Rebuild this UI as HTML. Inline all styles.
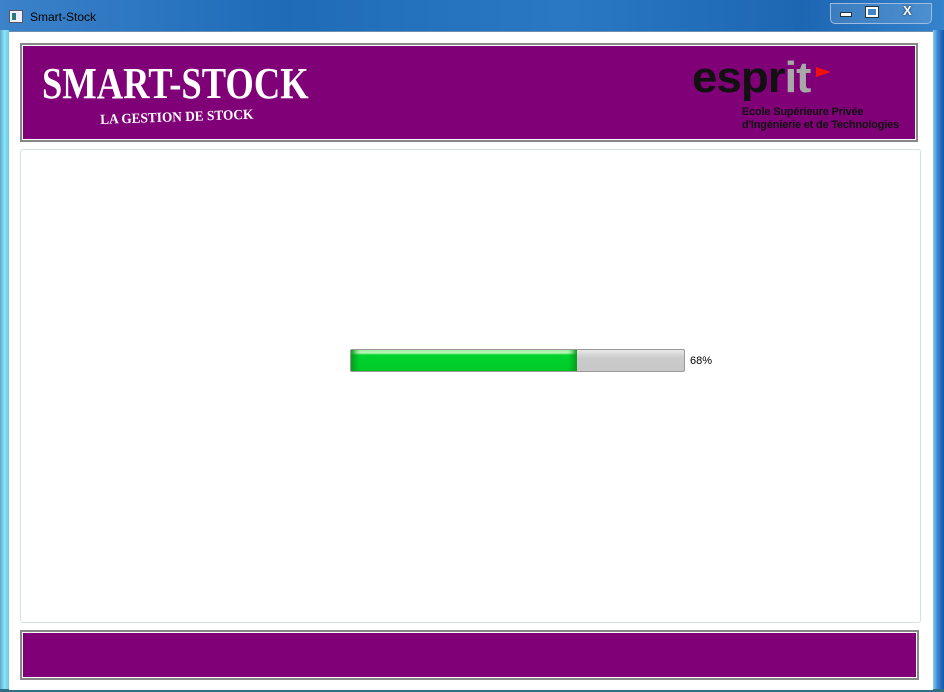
<!DOCTYPE html>
<html><head><meta charset="utf-8"><style>
body{margin:0;width:944px;height:692px;overflow:hidden;position:relative;background:#2f7fc8;font-family:"Liberation Sans",sans-serif}
.abs{position:absolute}
</style></head><body>
<div class="abs" style="left:0;top:0;width:944px;height:32px;background:linear-gradient(90deg,#3b82c9,#1f6bb8 30%,#2a78c4 60%,#1d66b2 85%,#3583cc)"></div>
<div class="abs" style="left:0;top:30px;width:9px;height:662px;background:linear-gradient(90deg,#5aa9d0,#8ee4f7 50%,#6cc8e8)"></div>
<div class="abs" style="left:933px;top:30px;width:11px;height:662px;background:linear-gradient(90deg,#8ec8f0,#3a8ad6 40%,#1357a8)"></div>
<div class="abs" style="left:0;top:689px;width:944px;height:3px;background:#2f6f86"></div>
<div class="abs" style="left:9px;top:10px;width:12px;height:11px;background:#eef;border:1px solid #556"><div style="width:4px;height:7px;background:#2a7a7a;margin:2px"></div></div>
<div class="abs" style="left:30px;top:10px;font-size:12px;color:#000">Smart-Stock</div>
<div class="abs" style="left:830px;top:3px;width:100px;height:19px;border:1px solid #9bbbe0;border-radius:0 0 5px 5px;background:rgba(255,255,255,.12)"></div>
<div class="abs" style="left:840px;top:12px;width:10px;height:3px;background:#fff;border:1px solid #234"></div>
<div class="abs" style="left:866px;top:7px;width:8px;height:6px;border:2px solid #fff;outline:1px solid #234"></div>
<div class="abs" style="left:903px;top:3px;color:#fff;font-weight:bold;font-size:13px;text-shadow:0 0 2px #123">X</div>
<div class="abs" style="left:9px;top:31px;width:924px;height:658px;background:#fff;border-top:1px solid #6a8fb2"></div>
<div class="abs" style="left:20px;top:43px;width:894px;height:95px;border:2px solid #888;background:#800078;box-shadow:inset 0 0 0 1px #fff"></div>
<div class="abs" style="left:42px;top:58px;color:#fff;font-family:'Liberation Serif',serif;font-weight:bold;font-size:44px;transform:scaleX(0.83);transform-origin:0 0;white-space:nowrap">SMART-STOCK</div>
<div class="abs" style="left:100px;top:113px;color:#fff;font-family:'Liberation Serif',serif;font-weight:bold;font-size:14px;transform:rotate(-2deg) scaleX(0.95);transform-origin:0 0;white-space:nowrap">LA GESTION DE STOCK</div>
<div class="abs" style="left:692px;top:53px;font-size:44px;font-weight:bold;letter-spacing:-1px;color:#111;transform:scaleX(1.04);transform-origin:0 0">espr<span style="color:#a8a8a8">it</span></div>
<div class="abs" style="left:816px;top:67px;width:0;height:0;border-left:15px solid #f01010;border-top:5px solid transparent;border-bottom:5px solid transparent"></div>
<div class="abs" style="left:742px;top:106px;font-size:11px;font-weight:bold;line-height:13px;color:#111;letter-spacing:-.2px;white-space:nowrap">Ecole Supérieure Privée<br>d'Ingénierie et de Technologies</div>
<div class="abs" style="left:20px;top:149px;width:899px;height:472px;border:1px solid #d5dfe5;border-radius:3px"></div>
<div class="abs" style="left:350px;top:349px;width:333px;height:21px;border:1px solid #999;border-radius:2px;background:linear-gradient(#e8e8e8,#cacaca 40%,#c8c8c8)"></div>
<div class="abs" style="left:351px;top:350px;width:226px;height:21px;background:linear-gradient(#b7f7b7 0,#b7f7b7 3px,#00d22c 5px,#00cc2a);box-shadow:inset 8px 0 6px -4px #0a9a20,inset -8px 0 6px -4px #0a9a20"></div>
<div class="abs" style="left:690px;top:355px;font-size:11px;color:#000">68%</div>
<div class="abs" style="left:20px;top:630px;width:895px;height:46px;border:2px solid #888;background:#800078;box-shadow:inset 0 0 0 1px #fff"></div>
</body></html>
